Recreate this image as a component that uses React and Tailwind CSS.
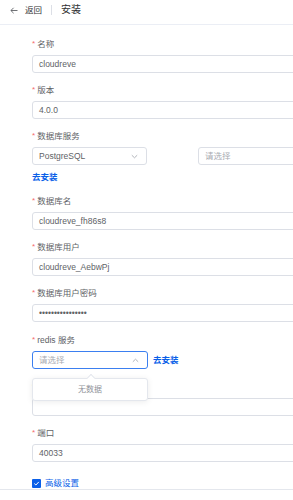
import React from "react";

const font = { fontFamily: '"Liberation Sans", "Noto Sans CJK SC", sans-serif' };

function Label({ children }) {
  return (
    <div className="flex items-center h-[13px] text-[8.5px] text-[#606266] leading-none">
      <span className="text-[#f56c6c] text-[8px] mr-[2px] relative -top-[1px]">*</span>
      <span>{children}</span>
    </div>
  );
}

function Input({ value, w = "w-[300px]", placeholder, children, focused }) {
  return (
    <div
      className={`${w} shrink-0 h-[18px] mt-[4px] rounded-[3px] border ${
        focused ? "border-[#3b7ff0]" : "border-[#dcdfe6]"
      } bg-white flex items-center pl-[6px] pr-[7px] text-[8.5px] leading-none`}
    >
      <span className={`flex-1 ${placeholder ? "text-[#a8abb2]" : "text-[#606266]"}`}>
        {value || placeholder}
      </span>
      {children}
    </div>
  );
}

function ChevronDown() {
  return (
    <svg width="7" height="5" viewBox="0 0 7 5" className="mr-[1px]">
      <path d="M0.8 1.2 L3.5 3.8 L6.2 1.2" fill="none" stroke="#a8abb2" strokeWidth="0.9" />
    </svg>
  );
}
function ChevronUp() {
  return (
    <svg width="7" height="5" viewBox="0 0 7 5" className="mr-[1px]">
      <path d="M0.8 3.8 L3.5 1.2 L6.2 3.8" fill="none" stroke="#a8abb2" strokeWidth="0.9" />
    </svg>
  );
}

function Item({ label, children, className = "mb-[11px]" }) {
  return (
    <div className={className}>
      <Label>{label}</Label>
      {children}
    </div>
  );
}

export default function App() {
  return (
    <div className="relative w-full h-[500px] overflow-hidden bg-white" style={font}>
      <div className="h-[25px] border-b border-[#ebeef5] flex items-start">
        <div className="h-[20px] flex items-center pl-[10px]">
          <svg width="8" height="7" viewBox="0 0 8 7">
            <path d="M7.5 3.5 H1 M3.6 0.8 L0.9 3.5 L3.6 6.2" fill="none" stroke="#606266" strokeWidth="0.9" />
          </svg>
          <span className="ml-[7px] text-[8.5px] text-[#303133] leading-none">返回</span>
          <span className="ml-[9px] w-px h-[10px] bg-[#dcdfe6]" />
          <span className="ml-[9px] text-[10px] text-[#303133] leading-none">安装</span>
        </div>
      </div>

      <div className="pl-[32px] pt-[13px]">
        <Item label="名称">
          <Input value="cloudreve" />
        </Item>
        <Item label="版本">
          <Input value="4.0.0" />
        </Item>
        <Item label="数据库服务" className="mb-[11px]">
          <div className="flex gap-[51px]">
            <Input value="PostgreSQL" w="w-[115px]">
              <ChevronDown />
            </Input>
            <Input placeholder="请选择" w="w-[150px]" />
          </div>
          <div className="h-[14px] mt-[5px] flex items-center text-[8.5px] font-bold text-[#0a5fe8] leading-none">
            去安装
          </div>
        </Item>
        <Item label="数据库名">
          <Input value="cloudreve_fh86s8" />
        </Item>
        <Item label="数据库用户">
          <Input value="cloudreve_AebwPj" />
        </Item>
        <Item label="数据库用户密码" className="mb-[12px]">
          <Input value="••••••••••••••••" />
        </Item>
        <Item label="redis 服务" className="mb-[12px]">
          <div className="flex items-center">
            <Input placeholder="请选择" w="w-[116px]" focused>
              <ChevronUp />
            </Input>
            <span className="ml-[5px] mt-[4px] text-[8.5px] font-bold text-[#0a5fe8] leading-none">去安装</span>
          </div>
        </Item>
        <Item label="redis 密码" className="mb-[11px]">
          <Input value="" />
        </Item>
        <Item label="端口">
          <Input value="40033" />
        </Item>
        <div className="mt-[17px] flex items-center h-[9px]">
          <span className="w-[9px] h-[9px] bg-[#0a5fe8] rounded-[1px] flex items-center justify-center">
            <svg width="7" height="7" viewBox="0 0 7 7">
              <path d="M1.3 3.6 L2.9 5 L5.8 1.9" fill="none" stroke="#fff" strokeWidth="1" />
            </svg>
          </span>
          <span className="ml-[4px] text-[8.5px] text-[#0a5fe8] leading-none">高级设置</span>
        </div>
      </div>

      {/* dropdown popover */}
      <div className="absolute left-[32px] top-[378px] w-[116px] h-[23px] bg-white border border-[#e4e7ed] rounded-[3px] shadow-[0_1px_6px_rgba(0,0,0,0.08)] flex items-center justify-center">
        <span className="absolute -top-[4px] left-[55px] w-[6px] h-[6px] bg-white border-l border-t border-[#e4e7ed] rotate-45" />
        <span className="text-[8px] text-[#909399] leading-none">无数据</span>
      </div>

      {/* footer bar */}
      <div className="absolute left-0 right-0 top-[489px] bottom-0 bg-white border-t border-[#e4e7ed]" />
    </div>
  );
}
